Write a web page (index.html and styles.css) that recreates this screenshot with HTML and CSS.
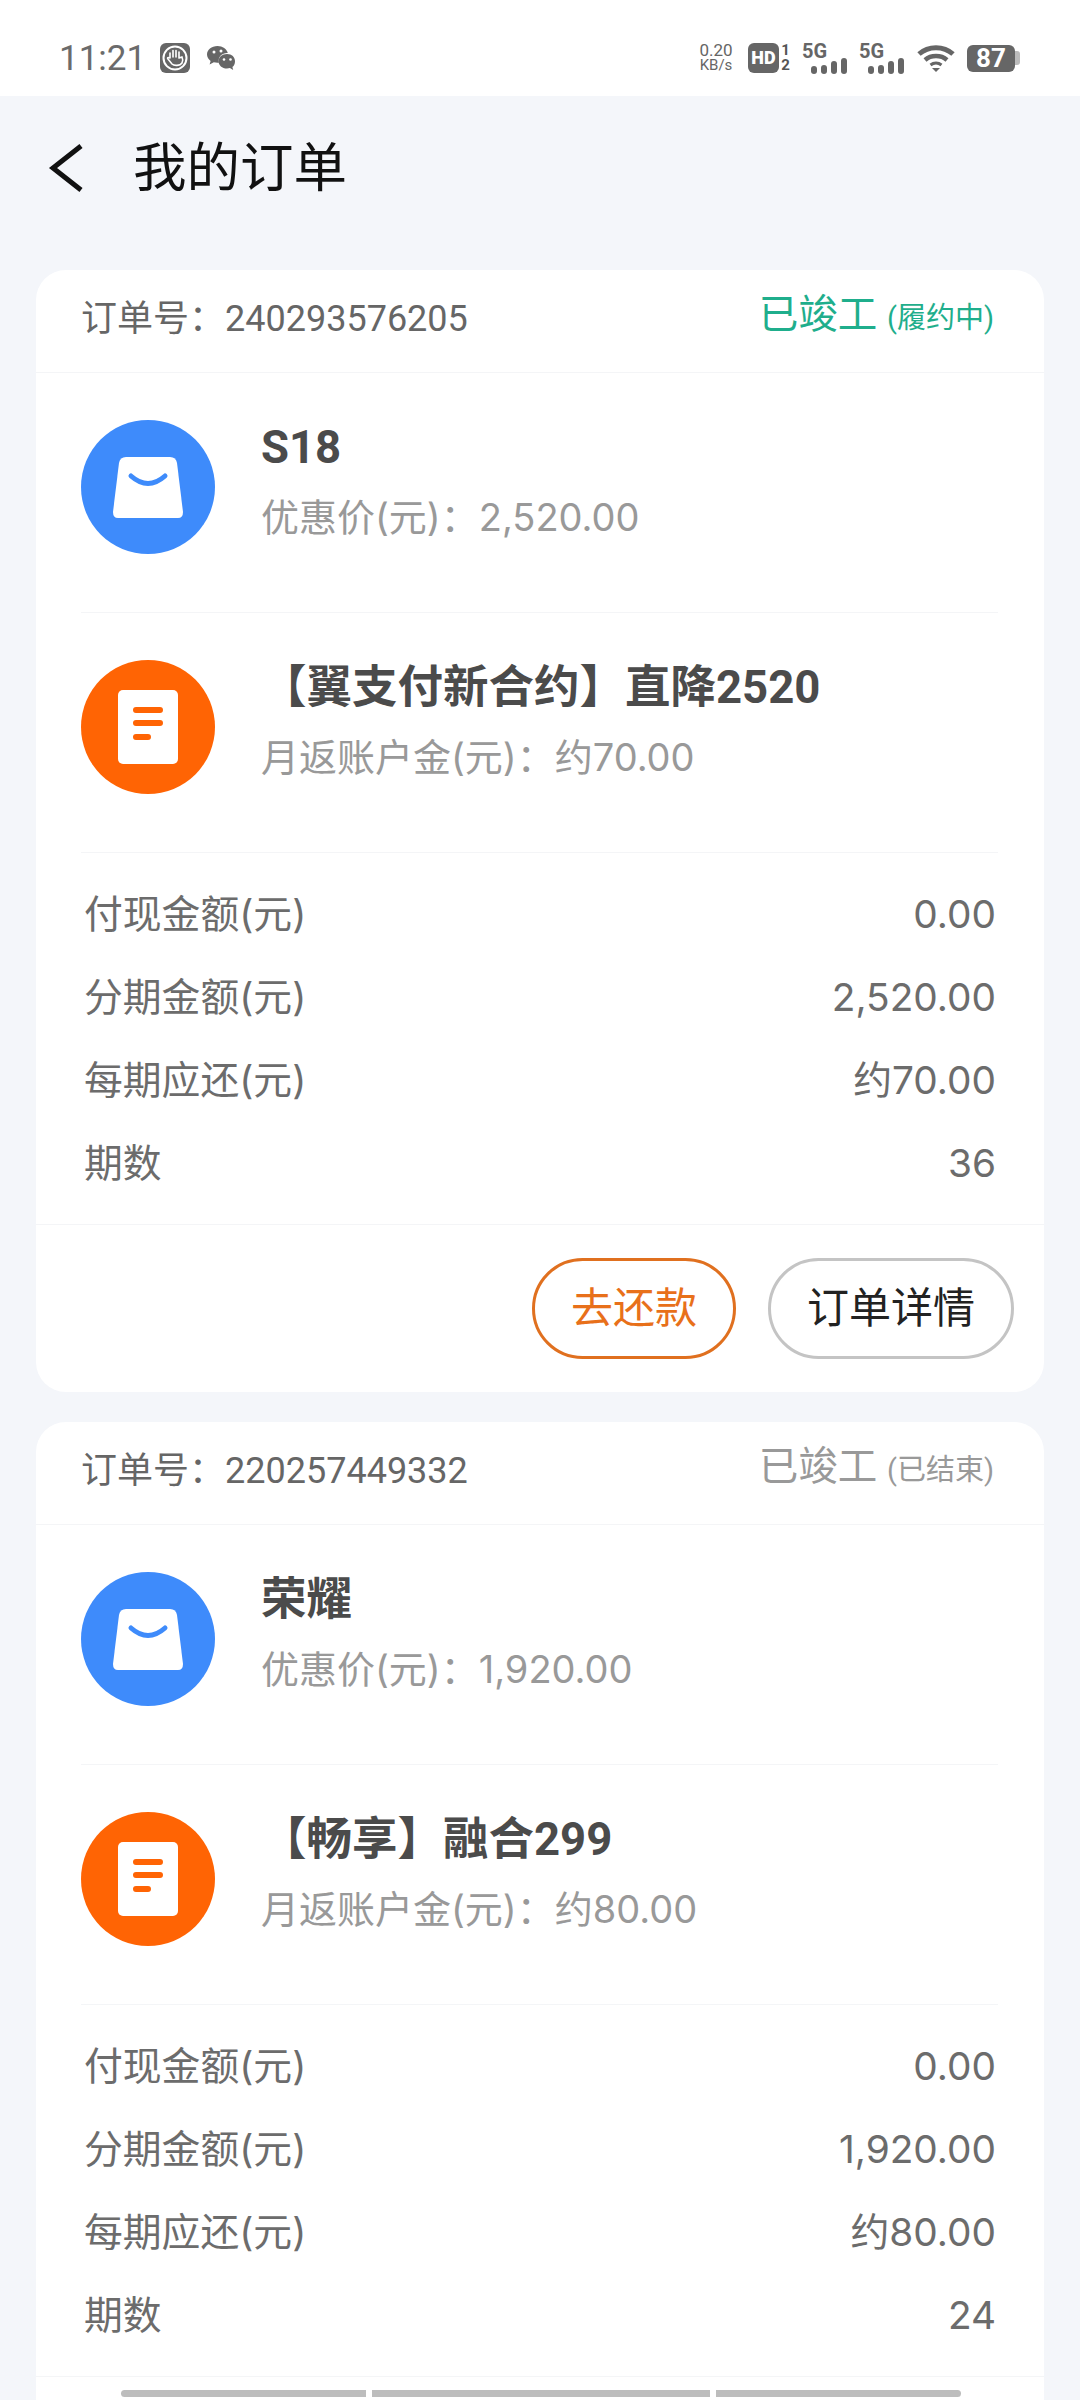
FILE: index.html
```html
<!DOCTYPE html>
<html>
  <head>
    <title>我的订单</title>
    <link rel="stylesheet" href="styles.css">
  </head>
  <body>
    <div class="statusbar">
      <div class="status-left">
        <span class="clock">11:21</span>
        <svg class="app-icon" width="30" height="30" viewBox="0 0 30 30">
          <rect width="30" height="30" rx="6" fill="#666"/>
          <circle cx="15" cy="15" r="11.5" fill="none" stroke="#fff" stroke-width="2"/>
          <path d="M10 15V10M13 14V7.5M16 14V7.5M19 14.5V9M10 15c-2-1-3 0-2 1l4 5c2 2 8 2 10-1 1-2 1-4 0-6l-3 1" fill="none" stroke="#fff" stroke-width="1.6" stroke-linecap="round"/>
        </svg>
        <svg class="app-icon wechat" width="30" height="26" viewBox="0 0 30 26">
          <path d="M11.5 1C5.5 1 1 4.8 1 9.5c0 2.6 1.4 4.8 3.6 6.4L3.6 19.5l4.2-2.2c1.2.3 2.4.5 3.7.5.5 0 1 0 1.400-.1C11.500 11 17 7.500 21.800 8 20.800 4 16.600 1 11.500 1z" fill="#666"/>
          <path d="M21 9c-4.900 0-8.500 3.200-8.500 7.200S16.100 23.500 21 23.500c1 0 2-.1 2.900-.4l3.300 1.800-.8-2.900c1.800-1.400 2.600-3.400 2.600-5.800C29 12.200 25.900 9 21 9z" fill="#666"/>
          <circle cx="8" cy="7" r="1.500" fill="#fff"/><circle cx="15" cy="6" r="1.500" fill="#fff"/>
          <circle cx="18" cy="14.500" r="1.300" fill="#fff"/><circle cx="24.500" cy="14.500" r="1.300" fill="#fff"/>
        </svg>
      </div>
      <div class="status-right">
        <div class="speed"><span>0.20</span><span class="speed-unit">KB/s</span></div>
        <div class="hd">
          <span class="hd-badge">HD</span>
          <span class="hd-sims"><span>1</span><span>2</span></span>
        </div>
        <div class="signal">
          <span class="signal-label">5G</span>
          <span class="bars"><i class="b1"></i><i class="b2"></i><i class="b3"></i><i class="b4"></i></span>
        </div>
        <div class="signal">
          <span class="signal-label">5G</span>
          <span class="bars"><i class="b1"></i><i class="b2"></i><i class="b3"></i><i class="b4"></i></span>
        </div>
        <svg class="wifi" width="38" height="28" viewBox="0 0 38 28">
          <path d="M2 10C11.500 1.500 26.500 1.500 36 10" fill="none" stroke="#666" stroke-width="5"/>
          <path d="M8 16C14 10.800 24 10.800 30 16" fill="none" stroke="#666" stroke-width="4.500"/>
          <path d="M13.500 21c3.300-2.600 7.700-2.600 11 0" fill="none" stroke="#666" stroke-width="3"/>
          <path d="M15 24h8l-4 4z" fill="#666"/>
        </svg>
        <div class="battery"><span class="battery-body">87</span><span class="battery-tip"></span></div>
      </div>
    </div>

    <div class="titlebar">
      <svg class="back" width="36" height="50" viewBox="0 0 36 50">
        <path d="M33 3L5 25l28 22" fill="none" stroke="#111" stroke-width="5"/>
      </svg>
      <span class="page-title">我的订单</span>
    </div>

    <div class="card">
      <div class="card-head">
        <span class="order-no">订单号：<span class="num">240293576205</span></span>
        <span class="state state-active">已竣工 <small>(履约中)</small></span>
      </div>
      <div class="items">
        <div class="item">
          <svg class="item-icon" width="134" height="134" viewBox="0 0 134 134">
            <circle cx="67" cy="67" r="67" fill="#3e8bfb"/>
            <path d="M45 37H89Q95 37 96 43L102 92Q102 98 97 98H37Q32 98 32 92L38 43Q39 37 45 37z" fill="#fff"/>
            <path d="M50 56Q67 71 84 56" fill="none" stroke="#3e8bfb" stroke-width="5" stroke-linecap="round"/>
          </svg>
          <div class="item-text">
            <div class="item-name">S18</div>
            <div class="item-sub">优惠价(元)：2,520.00</div>
          </div>
        </div>
        <div class="item">
          <svg class="item-icon" width="134" height="134" viewBox="0 0 134 134">
            <circle cx="67" cy="67" r="67" fill="#ff6404"/>
            <rect x="37" y="30" width="60" height="74" rx="5" fill="#fff"/>
            <path d="M55 50H79M55 63H79M55 77H67" fill="none" stroke="#ff6404" stroke-width="6" stroke-linecap="round"/>
          </svg>
          <div class="item-text">
            <div class="item-name">【翼支付新合约】直降2520</div>
            <div class="item-sub">月返账户金(元)：约70.00</div>
          </div>
        </div>
      </div>
      <div class="amounts">
        <div class="amount-row"><span>付现金额(元)</span><span>0.00</span></div>
        <div class="amount-row"><span>分期金额(元)</span><span>2,520.00</span></div>
        <div class="amount-row"><span>每期应还(元)</span><span>约70.00</span></div>
        <div class="amount-row"><span>期数</span><span>36</span></div>
      </div>
      <div class="actions">
        <span class="btn btn-pay">去还款</span>
        <span class="btn">订单详情</span>
      </div>
    </div>

    <div class="card">
      <div class="card-head">
        <span class="order-no">订单号：<span class="num">220257449332</span></span>
        <span class="state">已竣工 <small>(已结束)</small></span>
      </div>
      <div class="items">
        <div class="item">
          <svg class="item-icon" width="134" height="134" viewBox="0 0 134 134">
            <circle cx="67" cy="67" r="67" fill="#3e8bfb"/>
            <path d="M45 37H89Q95 37 96 43L102 92Q102 98 97 98H37Q32 98 32 92L38 43Q39 37 45 37z" fill="#fff"/>
            <path d="M50 56Q67 71 84 56" fill="none" stroke="#3e8bfb" stroke-width="5" stroke-linecap="round"/>
          </svg>
          <div class="item-text">
            <div class="item-name">荣耀</div>
            <div class="item-sub">优惠价(元)：1,920.00</div>
          </div>
        </div>
        <div class="item">
          <svg class="item-icon" width="134" height="134" viewBox="0 0 134 134">
            <circle cx="67" cy="67" r="67" fill="#ff6404"/>
            <rect x="37" y="30" width="60" height="74" rx="5" fill="#fff"/>
            <path d="M55 50H79M55 63H79M55 77H67" fill="none" stroke="#ff6404" stroke-width="6" stroke-linecap="round"/>
          </svg>
          <div class="item-text">
            <div class="item-name">【畅享】融合299</div>
            <div class="item-sub">月返账户金(元)：约80.00</div>
          </div>
        </div>
      </div>
      <div class="amounts">
        <div class="amount-row"><span>付现金额(元)</span><span>0.00</span></div>
        <div class="amount-row"><span>分期金额(元)</span><span>1,920.00</span></div>
        <div class="amount-row"><span>每期应还(元)</span><span>约80.00</span></div>
        <div class="amount-row"><span>期数</span><span>24</span></div>
      </div>
      <div class="actions"></div>
    </div>

    <div class="scrollbars">
      <span class="bar-a"></span>
      <span class="bar-b"></span>
      <span class="bar-c"></span>
    </div>
  </body>
</html>
```

FILE: styles.css
```css
* {
  box-sizing: border-box;
  margin: 0;
  padding: 0;
}

html, body {
  width: 1080px;
  height: 2400px;
  overflow: hidden;
}

body {
  position: relative;
  background: #f4f6fa;
  font-family: Roboto, "Noto Sans CJK SC", sans-serif;
  color: #666;
}

/* status bar */
.statusbar {
  height: 96px;
  background: #fff;
  display: flex;
  justify-content: space-between;
  align-items: center;
  padding: 20px 60px 0 59px;
}

.status-left {
  display: flex;
  align-items: center;
}

.clock {
  font-size: 35px;
  color: #6b6b6b;
  width: 101px;
}

.wechat {
  margin-left: 16px;
}

.status-right {
  display: flex;
  align-items: center;
}

.speed {
  display: flex;
  flex-direction: column;
  align-items: center;
  width: 38px;
  font-size: 17px;
  line-height: 15px;
  color: #666;
}

.speed-unit {
  font-size: 15px;
}

.hd {
  display: flex;
  align-items: center;
  margin-left: 13px;
}

.hd-badge {
  width: 31px;
  height: 30px;
  border-radius: 6px;
  background: #666;
  color: #fff;
  font-size: 18px;
  font-weight: 900;
  line-height: 30px;
  text-align: center;
}

.hd-sims {
  display: flex;
  flex-direction: column;
  width: 11px;
  margin-left: 1px;
  font-size: 15px;
  font-weight: 700;
  line-height: 15px;
  color: #555;
  text-align: center;
}

.signal {
  width: 45px;
  height: 32px;
  margin-left: 11px;
  position: relative;
}

.signal + .signal {
  margin-left: 12px;
}

.signal-label {
  position: absolute;
  left: 0;
  top: -1px;
  font-size: 20px;
  font-weight: 700;
  line-height: 20px;
  color: #666;
}

.bars {
  position: absolute;
  right: 0;
  bottom: 0;
  display: flex;
  align-items: flex-end;
  gap: 4px;
}

.bars i {
  display: block;
  width: 6px;
  border-radius: 3px;
  background: #666;
}

.bars .b1 { height: 8px; }
.bars .b2 { height: 9px; }
.bars .b3 { height: 13px; }
.bars .b4 { height: 16px; }

.wifi {
  margin-left: 13px;
}

.battery {
  display: flex;
  align-items: center;
  margin-left: 12px;
}

.battery-body {
  width: 48px;
  height: 27px;
  border-radius: 6px;
  background: #666;
  color: #fff;
  font-size: 26px;
  font-weight: 700;
  line-height: 27px;
  text-align: center;
}

.battery-tip {
  width: 5px;
  height: 14px;
  background: #bbb;
  border-radius: 0 3px 3px 0;
}

/* title */
.titlebar {
  height: 174px;
  display: flex;
  align-items: flex-start;
  padding: 47px 0 0 48px;
}

.back {
  margin-right: 49px;
}

.page-title {
  font-size: 53.5px;
  line-height: 52px;
  color: #111;
}

/* order card */
.card {
  width: 1008px;
  margin: 0 36px 30px;
  background: #fff;
  border-radius: 30px;
}

.card-head {
  height: 103px;
  display: flex;
  justify-content: space-between;
  align-items: center;
  padding: 0 50px 13px 45px;
  border-bottom: 1px solid #f4f5f7;
}

.order-no {
  font-size: 36px;
  color: #666;
}

.state {
  margin-bottom: 8px;
  font-size: 39.5px;
  color: #999;
}

.state small {
  font-size: 29px;
}

.state-active {
  color: #1fae8c;
}

.items {
  margin: 0 46px 0 45px;
}

.item {
  height: 240px;
  display: flex;
  align-items: flex-start;
  padding-top: 47px;
  border-bottom: 1px solid #f4f5f7;
}

.item-text {
  margin-left: 46px;
}

.item-name {
  font-size: 45.5px;
  font-weight: 700;
  line-height: 56px;
  color: #4b4b4b;
}

.item-sub {
  margin-top: 13px;
  font-family: Inter, "Noto Sans CJK SC", sans-serif;
  font-size: 38px;
  line-height: 56px;
  color: #999;
}

.amounts {
  padding: 19px 48px 0 48px;
  height: 372px;
  border-bottom: 1px solid #f4f5f7;
}

.amount-row {
  height: 83px;
  display: flex;
  justify-content: space-between;
  align-items: center;
  font-family: Inter, "Noto Sans CJK SC", sans-serif;
  font-size: 38.8px;
  line-height: 56px;
  color: #6c6c6c;
}

.actions {
  height: 167px;
  display: flex;
  justify-content: flex-end;
  align-items: flex-start;
  gap: 32px;
  padding: 33px 30px 0 0;
}

.btn {
  height: 101px;
  padding: 0 36px;
  border: 3px solid #c4c4c4;
  border-radius: 51px;
  font-size: 42px;
  line-height: 95px;
  color: #222;
}

.btn-pay {
  border-color: #e0701f;
  color: #e8701a;
}

/* bottom scroll indicator */
.scrollbars {
  position: absolute;
  left: 121px;
  bottom: 3px;
  display: flex;
  gap: 6px;
}

.scrollbars span {
  height: 7px;
  background: #bdbdbd;
}

.bar-a {
  width: 245px;
  border-radius: 4px 0 0 4px;
}

.bar-b {
  width: 338px;
}

.bar-c {
  width: 245px;
  border-radius: 0 4px 4px 0;
}
```
